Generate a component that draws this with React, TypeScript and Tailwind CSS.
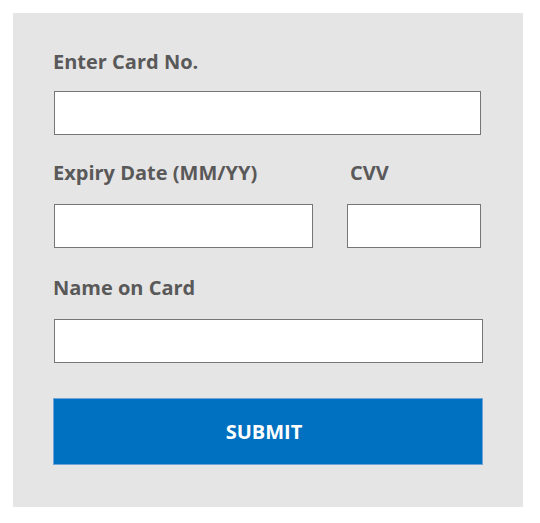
export default function App() {
  return (
    <div className="w-[540px] h-[523px] bg-white p-[13px] font-['Open_Sans',sans-serif]">
      <div className="w-[510px] h-[494px] bg-[#e6e5e6] pl-[41px] pt-[36px]">
        <label className="block text-[20px] font-bold text-[#595959] leading-[26px] -ml-px">
          Enter Card No.
        </label>
        <input className="block mt-[16px] w-[427px] h-[44px] bg-white border border-[#767676]" />

        <div className="flex mt-[25px]">
          <div className="w-[293px]">
            <label className="block text-[20px] font-bold text-[#595959] leading-[26px] -ml-px">
              Expiry Date (MM/YY)
            </label>
            <input className="block mt-[18px] w-[259px] h-[44px] bg-white border border-[#767676]" />
          </div>
          <div>
            <label className="block text-[20px] font-bold text-[#595959] leading-[26px] pl-[3px]">
              CVV
            </label>
            <input className="block mt-[18px] w-[134px] h-[44px] bg-white border border-[#767676]" />
          </div>
        </div>

        <label className="block mt-[27px] text-[20px] font-bold text-[#595959] leading-[26px] -ml-px">
          Name on Card
        </label>
        <input className="block mt-[18px] w-[429px] h-[44px] bg-white border border-[#767676]" />

        <button className="block mt-[35px] -ml-px w-[430px] h-[67px] pr-[8px] bg-[#0070c0] border border-[#6fa3d8] text-white text-[20px] font-bold">
          SUBMIT
        </button>
      </div>
    </div>
  );
}
